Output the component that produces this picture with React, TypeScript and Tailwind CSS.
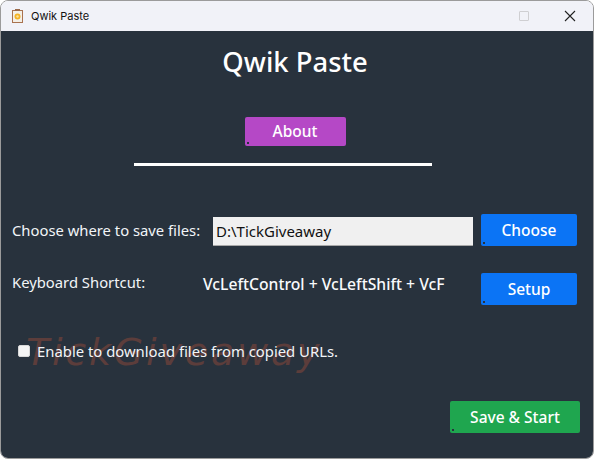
import React from 'react';

const font = "font-['Noto_Sans','Open_Sans',sans-serif]";

const AppIcon = () => (
  <svg width="14" height="16" viewBox="0 0 14 16">
    <rect x="1.5" y="2.5" width="10" height="12" fill="#f4efe6" stroke="#a9724f" strokeWidth="1" />
    <rect x="4" y="1" width="5" height="2" fill="#9a6a4c" />
    <circle cx="6.5" cy="8.5" r="3" fill="#f5b324" />
    <circle cx="6.5" cy="8.5" r="1.2" fill="#fbe3a0" />
  </svg>
);

const ActionButton = ({ label, className }: { label: string; className: string }) => (
  <button className={`relative rounded-[2px] text-white text-[15.5px] font-medium leading-none ${className}`}>
    {label}
    <span className="absolute left-[2px] bottom-[2px] w-[2px] h-[2px] bg-[#28323d]" />
  </button>
);

export default function App() {
  return (
    <div className={`w-[594px] h-[459px] bg-white overflow-hidden ${font}`}>
      <div className="relative w-full h-full flex flex-col border border-[#9b9b9b] rounded-[8px] overflow-hidden">
        <div className="h-[30px] shrink-0 bg-[#f1f2f8] flex items-center">
          <div className="w-[10px]" />
          <AppIcon />
          <span className="ml-[6px] text-[11px] text-[#111] font-['Inter',sans-serif]">Qwik Paste</span>
          <div className="ml-auto flex items-center">
            <div className="w-[10px] h-[10px] border border-[#cfcfd2] rounded-[1px] mr-[35px]" />
            <svg width="12" height="12" viewBox="0 0 12 12" className="mr-[17px]">
              <path d="M1 1 L11 11 M11 1 L1 11" stroke="#222" strokeWidth="1.1" />
            </svg>
          </div>
        </div>

        <div className="relative flex-1 bg-[#28323d] flex flex-col">
          <h1 className="mt-[13px] h-[36px] pr-[4px] text-center text-[27.4px] leading-[36px] font-medium text-white">Qwik Paste</h1>

          <ActionButton label="About" className="mt-[37px] self-center ml-[-4px] w-[101px] h-[29px] bg-[#b548c6]" />
          <div className="mt-[17px] ml-[133px] w-[298px] h-[3px] bg-white" />

          <div className="mt-[48px] ml-[11px] flex items-center h-[32px]">
            <span className="w-[201px] pt-[1px] text-[14.8px] text-[#f2f5f8]">Choose where to save files:</span>
            <input
              readOnly
              value="D:\TickGiveaway"
              className="mt-[3px] w-[260px] h-[29px] px-[3px] bg-[#f0f0f0] text-[15px] text-[#111] border-b border-[#a8a8a8] outline-none"
            />
            <ActionButton label="Choose" className="ml-[8px] w-[96px] h-[32px] pt-[2px] bg-[#0b74f5]" />
          </div>

          <div className="mt-[27px] ml-[11px] flex items-start h-[32px]">
            <span className="mt-[-2px] w-[191px] text-[14.8px] text-[#f2f5f8]">Keyboard Shortcut:</span>
            <span className="w-[278px] text-[15.7px] leading-[23px] font-medium text-[#f8fafc]">VcLeftControl + VcLeftShift + VcF</span>
            <ActionButton label="Setup" className="w-[96px] h-[32px] pt-[2px] bg-[#0b74f5]" />
          </div>

          <label className="mt-[38px] ml-[17px] flex items-center h-[16px] relative z-10">
            <span className="mt-[-1px] w-[12px] h-[12px] rounded-[2px] bg-[#f4f4f4] border border-[#d8d8d8]" />
            <span className="ml-[7px] text-[14.85px] text-[#f2f5f8]">Enable to download files from copied URLs.</span>
          </label>

          <ActionButton label="Save & Start" className="mt-[42px] ml-[449px] w-[130px] h-[32px] pt-[2px] bg-[#1fa64f]" />

          <div className="absolute left-[25px] top-[299px] text-[38px] leading-[44px] italic text-[#5c3d3b] tracking-[2.8px] font-['DejaVu_Sans',sans-serif] font-extralight pointer-events-none">
            TickGiveaway
          </div>
        </div>
      </div>
    </div>
  );
}
